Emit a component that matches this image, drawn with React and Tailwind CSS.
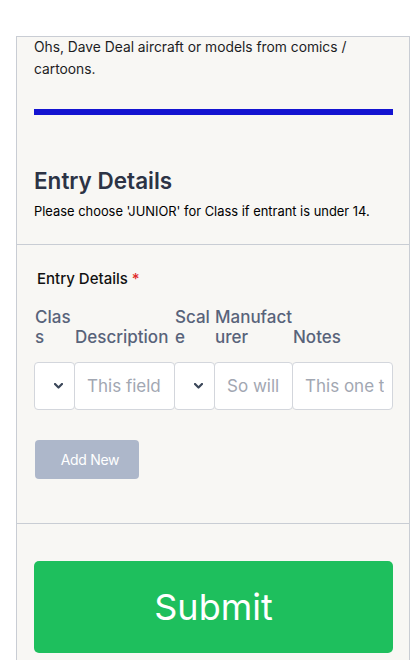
import React from "react";

const FONT = { fontFamily: "Inter, 'Noto Sans', sans-serif" };

function Chevron() {
  return (
    <svg width="9" height="6" viewBox="0 0 9 6" fill="none" className="shrink-0">
      <path d="M1 1l3.5 3.5L8 1" stroke="#3b4759" strokeWidth="2.2" strokeLinecap="round" strokeLinejoin="round" />
    </svg>
  );
}

function SelectCell({ className = "" }) {
  return (
    <div className={`flex h-12 items-center justify-end rounded-[4px] border border-[#d3d6dc] bg-white pr-[11px] ${className}`}>
      <Chevron />
    </div>
  );
}

function TextCell({ placeholder, className = "" }) {
  return (
    <input
      placeholder={placeholder}
      className={`h-12 rounded-[4px] border border-[#d3d6dc] bg-white pl-3 text-[17px] text-[#2c3345] outline-none placeholder:text-[#a2a7b2] ${className}`}
    />
  );
}

export default function App() {
  return (
    <div className="min-h-[660px] bg-white pt-9" style={FONT}>
      <div className="ml-4 w-[394px] border-x border-t border-[#c9cdd4] bg-[#f8f7f4]">
        {/* description + heading */}
        <section className="pl-[17px] pr-[16px] pb-[23px]">
          <p className="-mt-px text-[13.8px] leading-[22px] text-[#1d1d1f]">
            Ohs, Dave Deal aircraft or models from comics / cartoons.
          </p>
          <div className="mt-[29px] h-[6px] bg-[#1414d1]" />
          <h2 className="mt-[52px] text-[22.5px] font-semibold leading-7 text-[#2c3345]">Entry Details</h2>
          <p className="mt-2 text-[12.9px] leading-[18px] text-black">
            Please choose 'JUNIOR' for Class if entrant is under 14.
          </p>
        </section>

        {/* entry table */}
        <section className="border-t border-[#c9cdd4] pl-[17px] pr-[16px] pt-6 pb-[44px]">
          <label className="ml-[3px] block text-[15px] font-medium leading-5 text-[#111]">
            Entry Details <span className="text-[#e02b2b]">*</span>
          </label>

          <div className="mt-[18px] flex items-end text-[17px] font-medium leading-5 text-[#58637a]">
            <div className="w-10 break-all pl-px">Class</div>
            <div className="w-[100px] break-all pl-px">Description</div>
            <div className="w-10 break-all pl-px">Scale</div>
            <div className="w-[79px] break-all pl-px">Manufacturer</div>
            <div className="flex-1 break-all">Notes</div>
          </div>

          <div className="mt-[15px] flex">
            <SelectCell className="w-[41px] shrink-0" />
            <TextCell placeholder="This field is required" className="-ml-px w-[101px] min-w-0 pr-[13px]" />
            <SelectCell className="-ml-px w-[41px] shrink-0" />
            <TextCell placeholder="So will this" className="-ml-px w-[79px] min-w-0 pr-[13px]" />
            <TextCell placeholder="This one too" className="-ml-px w-[101px] min-w-0 pr-2" />
          </div>

          <button className="ml-px mt-[30px] h-[39px] w-[104px] rounded-[4px] bg-[#adb7ca] pl-[6px] text-[14px] tracking-[-0.3px] text-white">
            Add New
          </button>
        </section>

        {/* submit */}
        <section className="border-t border-[#c9cdd4] pl-[17px] pr-[16px] pt-[37px] pb-4">
          <button className="h-[92px] w-full rounded-[5px] bg-[#1ebf5d] text-[36px] text-white">Submit</button>
        </section>
      </div>
    </div>
  );
}
